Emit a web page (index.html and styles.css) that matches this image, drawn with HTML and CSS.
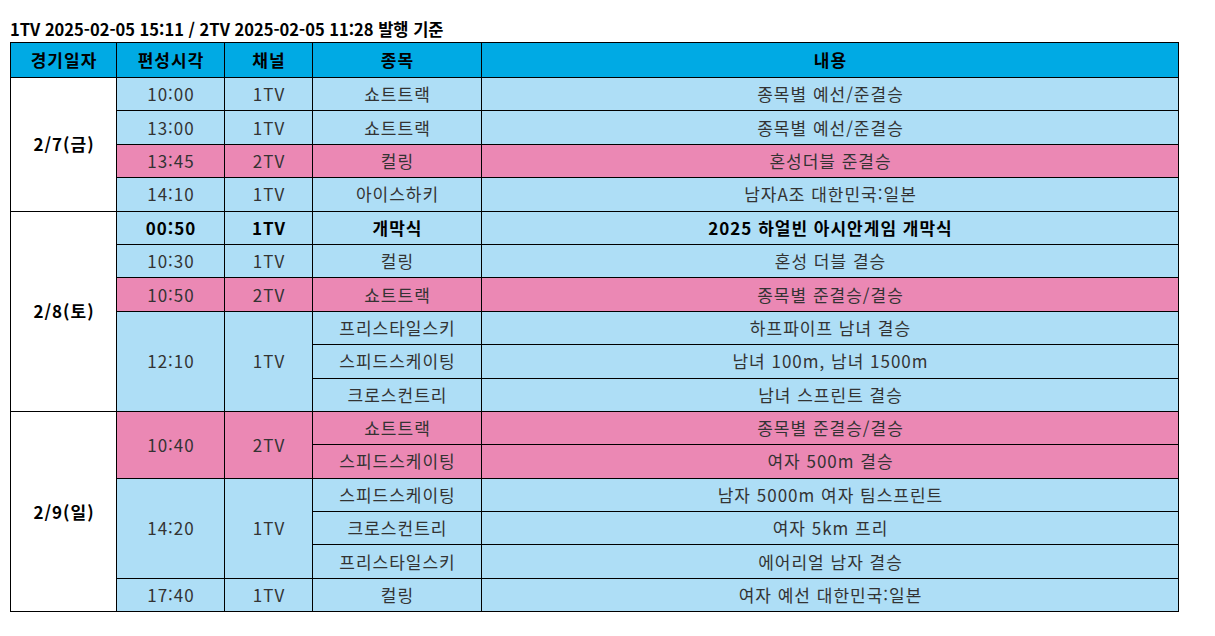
FILE: index.html
```html
<!DOCTYPE html>
<html lang="ko">
<head>
<meta charset="utf-8">
<title>편성표</title>
<link rel="stylesheet" href="styles.css">
</head>
<body>
<div class="page">
  <div class="title">1TV 2025-02-05 15:11 / 2TV 2025-02-05 11:28 발행 기준</div>
  <table class="sched">
    <colgroup>
      <col class="c-date"><col class="c-time"><col class="c-ch"><col class="c-ev"><col class="c-desc">
    </colgroup>
    <thead>
      <tr><th>경기일자</th><th>편성시각</th><th>채널</th><th>종목</th><th>내용</th></tr>
    </thead>
    <tbody>
      <tr class="blue"><td class="date" rowspan="4">2/7(금)</td><td>10:00</td><td>1TV</td><td>쇼트트랙</td><td>종목별 예선/준결승</td></tr>
      <tr class="blue"><td>13:00</td><td>1TV</td><td>쇼트트랙</td><td>종목별 예선/준결승</td></tr>
      <tr class="pink"><td>13:45</td><td>2TV</td><td>컬링</td><td>혼성더블 준결승</td></tr>
      <tr class="blue"><td>14:10</td><td>1TV</td><td>아이스하키</td><td>남자A조 대한민국:일본</td></tr>

      <tr class="blue bold"><td class="date" rowspan="6">2/8(토)</td><td>00:50</td><td>1TV</td><td>개막식</td><td>2025 하얼빈 아시안게임 개막식</td></tr>
      <tr class="blue"><td>10:30</td><td>1TV</td><td>컬링</td><td>혼성 더블 결승</td></tr>
      <tr class="pink"><td>10:50</td><td>2TV</td><td>쇼트트랙</td><td>종목별 준결승/결승</td></tr>
      <tr class="blue"><td rowspan="3">12:10</td><td rowspan="3">1TV</td><td>프리스타일스키</td><td>하프파이프 남녀 결승</td></tr>
      <tr class="blue"><td>스피드스케이팅</td><td>남녀 100m, 남녀 1500m</td></tr>
      <tr class="blue"><td>크로스컨트리</td><td>남녀 스프린트 결승</td></tr>

      <tr class="pink"><td class="date" rowspan="6">2/9(일)</td><td rowspan="2">10:40</td><td rowspan="2">2TV</td><td>쇼트트랙</td><td>종목별 준결승/결승</td></tr>
      <tr class="pink"><td>스피드스케이팅</td><td>여자 500m 결승</td></tr>
      <tr class="blue"><td rowspan="3">14:20</td><td rowspan="3">1TV</td><td>스피드스케이팅</td><td>남자 5000m 여자 팀스프린트</td></tr>
      <tr class="blue"><td>크로스컨트리</td><td>여자 5km 프리</td></tr>
      <tr class="blue"><td>프리스타일스키</td><td>에어리얼 남자 결승</td></tr>
      <tr class="blue"><td>17:40</td><td>1TV</td><td>컬링</td><td>여자 예선 대한민국:일본</td></tr>
    </tbody>
  </table>
</div>
</body>
</html>
```

FILE: styles.css
```css
html, body {
  margin: 0;
  padding: 0;
  background: #ffffff;
}

body {
  font-family: "Noto Sans CJK KR", "Noto Sans", sans-serif;
  color: #333333;
}

.page {
  padding: 18px 0 0 10px;
}

.title {
  font-size: 16.5px;
  font-weight: bold;
  color: #000000;
  line-height: 22px;
  height: 24px;
}

.sched {
  border-collapse: collapse;
  table-layout: fixed;
  width: 1168px;
  font-size: 17px;
}

.c-date { width: 106px; }
.c-time { width: 108px; }
.c-ch { width: 88px; }
.c-ev { width: 169px; }
.c-desc { width: 697px; }

.sched th,
.sched td {
  border: 1px solid #000000;
  text-align: center;
  vertical-align: middle;
  padding: 0 0 0 1px;
  line-height: 20px;
  letter-spacing: 1px;
}

.sched th {
  background: #00aae4;
  color: #000000;
  font-weight: bold;
  height: 34px;
}

.sched td {
  height: 32.4px;
}

.sched tr.blue td {
  background: #aedef6;
}

.sched tr.pink td {
  background: #eb88b4;
}

.sched tr.bold td {
  font-weight: bold;
  color: #000000;
}

.sched td.date {
  background: #ffffff !important;
  font-weight: bold;
  color: #000000;
}
```
